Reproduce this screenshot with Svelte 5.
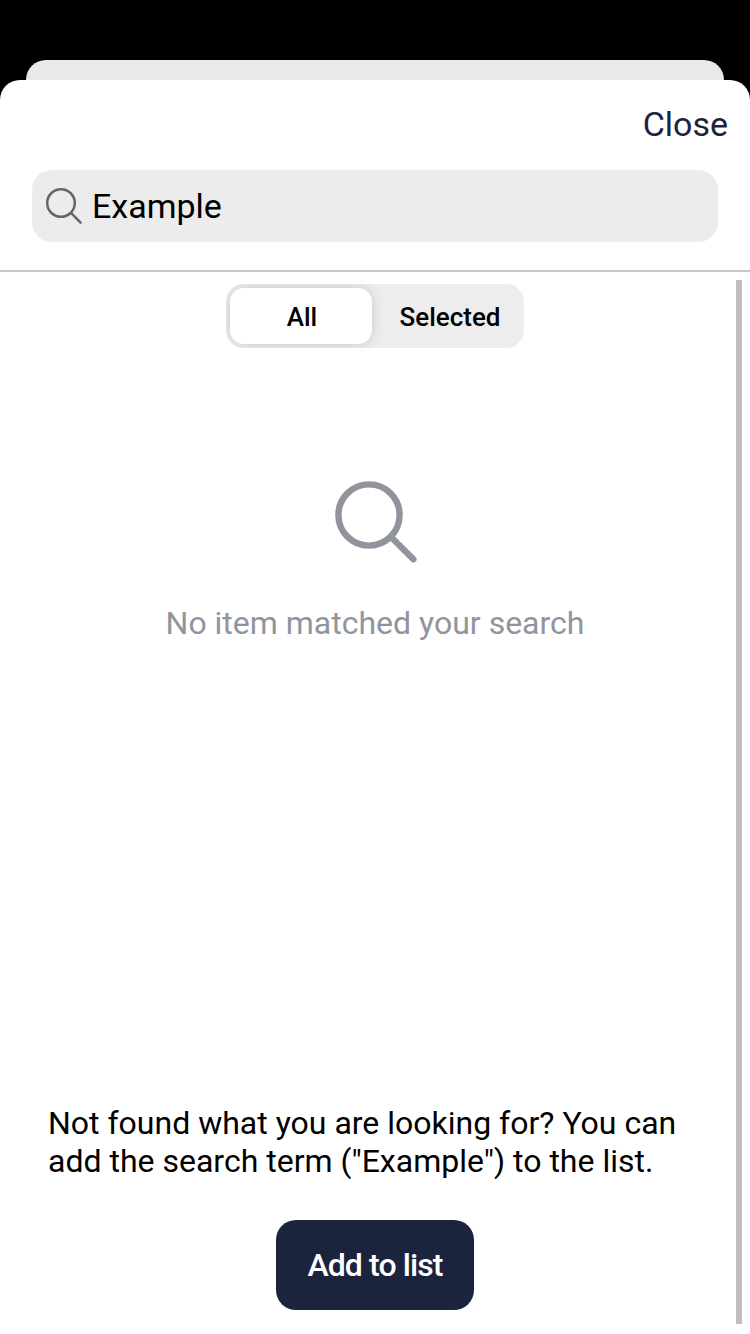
<script>
  let term = $state('Example');
  let tab = $state('All');
  const tabs = ['All', 'Selected'];
</script>

<div class="screen">
  <div class="behind"></div>
  <main class="sheet">
    <header>
      <button class="close">Close</button>
      <label class="search">
        <svg width="38" height="38" viewBox="0 0 38 38" fill="none" stroke="#666" stroke-linecap="round">
          <circle cx="16" cy="16" r="13.8" stroke-width="2.5" />
          <path d="M26.2 26.2 35.6 35.6" stroke-width="2.5" />
        </svg>
        <input bind:value={term} aria-label="Search" />
      </label>
    </header>
    <section class="body">
      <div class="segments">
        {#each tabs as name}
          <button class="segment" class:active={tab === name} onclick={() => (tab = name)}>{name}</button>
        {/each}
      </div>
      <div class="empty">
        <svg width="84" height="84" viewBox="0 0 84 84" fill="none" stroke="#91949d" stroke-width="6.4" stroke-linecap="round">
          <circle cx="36" cy="36" r="30.6" />
          <path d="M58.5 58.4 80.4 80.3" />
        </svg>
        <p>No item matched your search</p>
      </div>
      <div class="footer">
        <p>Not found what you are looking for? You can add the search term ("{term}") to the list.</p>
        <button class="add">Add to list</button>
      </div>
      <div class="scrollbar"></div>
    </section>
  </main>
</div>

<style>
  :global(body) { background: #000; overflow: hidden; }
  .screen {
    box-sizing: border-box;
    width: 750px;
    height: 1334px;
    padding-top: 60px;
    display: flex;
    flex-direction: column;
    background: #000;
    font-family: Roboto, sans-serif;
    color: #000;
  }
  .screen * { box-sizing: border-box; }
  button {
    border: 0;
    margin: 0;
    padding: 0;
    background: none;
    font-family: inherit;
    color: inherit;
  }
  svg { display: block; flex: none; }
  p { margin: 0; }
  .behind {
    height: 40px;
    margin: 0 26px -20px;
    border-radius: 20px 20px 0 0;
    background: #e9e9e9;
  }
  .sheet {
    flex: 1;
    z-index: 1;
    display: flex;
    flex-direction: column;
    border-radius: 20px 20px 0 0;
    background: #fff;
  }
  header {
    height: 192px;
    display: flex;
    flex-direction: column;
    border-bottom: 2px solid #c8c8c8;
  }
  .close {
    align-self: flex-end;
    height: 90px;
    padding: 0 22px 2px 0;
    font-size: 34px;
    color: #1b233d;
  }
  .search {
    height: 72px;
    margin: 0 32px;
    padding-left: 13px;
    display: flex;
    align-items: center;
    gap: 9px;
    border-radius: 20px;
    background: #ececec;
  }
  .search input {
    flex: 1;
    min-width: 0;
    padding: 0;
    border: 0;
    outline: 0;
    background: none;
    font: 34px Roboto, sans-serif;
    color: #000;
  }
  .body {
    position: relative;
    flex: 1;
    padding-top: 12px;
    display: flex;
    flex-direction: column;
    align-items: center;
  }
  .segments {
    width: 298px;
    height: 64px;
    padding: 4px;
    display: grid;
    grid-template-columns: 142px 1fr;
    border-radius: 18px;
    background: #ededed;
    overflow: hidden;
  }
  .segment {
    padding: 2px 0 0 8px;
    border-radius: 14px;
    font-size: 26px;
    font-weight: 500;
  }
  .segment.active {
    padding-left: 2px;
    background: #fff;
    box-shadow: 0 0 12px rgba(0, 0, 0, 0.16);
  }
  .empty {
    margin-top: 131px;
    display: flex;
    flex-direction: column;
    align-items: center;
    gap: 41px;
    font-size: 32px;
    line-height: 38px;
    color: #91949d;
  }
  .footer {
    width: 100%;
    margin-top: auto;
    padding: 0 48px 24px;
    display: flex;
    flex-direction: column;
    align-items: center;
    gap: 40px;
    font-size: 32px;
    line-height: 38px;
  }
  .add {
    width: 198px;
    height: 90px;
    border-radius: 20px;
    background: #1b233d;
    color: #fff;
    font-size: 32px;
    font-weight: 500;
    letter-spacing: -0.9px;
  }
  .scrollbar {
    position: absolute;
    top: 8px;
    right: 8px;
    bottom: 10px;
    width: 6px;
    background: #bebebe;
  }
</style>
